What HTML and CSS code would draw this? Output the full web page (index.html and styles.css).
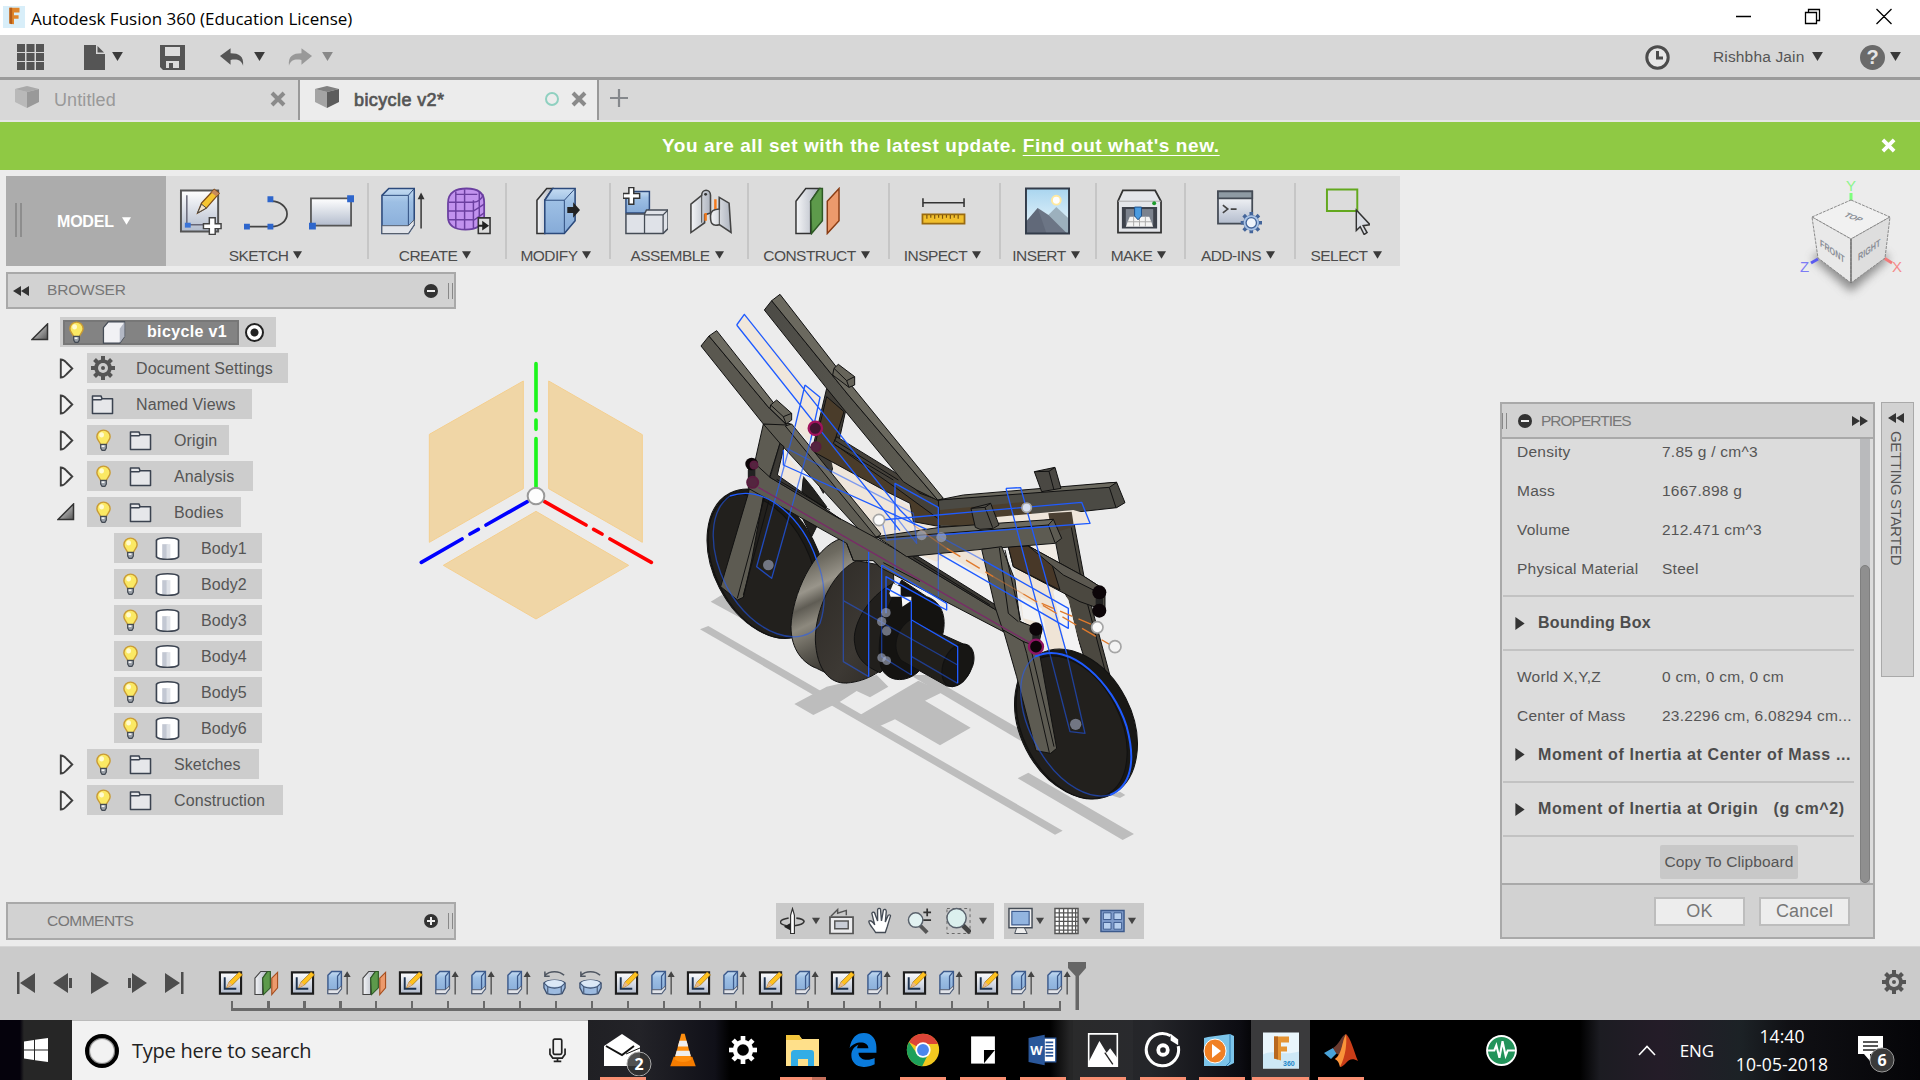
FILE: index.html
```html
<!DOCTYPE html>
<html lang="en">
<head>
<meta charset="utf-8">
<title>Autodesk Fusion 360 (Education License)</title>
<link rel="stylesheet" href="styles.css">
</head>
<body>
<svg class="defs" width="0" height="0" aria-hidden="true">
  <defs>
    <linearGradient id="gBlue" x1="0" y1="0" x2="0" y2="1"><stop offset="0" stop-color="#c5dcf2"/><stop offset=".3" stop-color="#9dbfe4"/><stop offset="1" stop-color="#86abd8"/></linearGradient>
    <linearGradient id="gPaper" x1="0" y1="0" x2="0" y2="1"><stop offset="0" stop-color="#fff"/><stop offset="1" stop-color="#b3bccd"/></linearGradient>
    <linearGradient id="gGrey" x1="0" y1="0" x2="1" y2="0"><stop offset="0" stop-color="#f4f5f7"/><stop offset="1" stop-color="#aeb4bf"/></linearGradient>
    <linearGradient id="gTri" x1="0" y1="0" x2="1" y2="1"><stop offset="0" stop-color="#eee"/><stop offset="1" stop-color="#555"/></linearGradient>
    <linearGradient id="gSilver" x1="0" y1="0" x2=".3" y2="1"><stop offset="0" stop-color="#4f4d47"/><stop offset=".22" stop-color="#6d6a60"/><stop offset=".38" stop-color="#99958b"/><stop offset=".48" stop-color="#5f5c54"/><stop offset=".6" stop-color="#8d897e"/><stop offset=".78" stop-color="#5b5850"/><stop offset="1" stop-color="#2e2c28"/></linearGradient>
    <linearGradient id="gBeam" x1="0" y1="0" x2="1" y2="1"><stop offset="0" stop-color="#4c4b46"/><stop offset="1" stop-color="#5f5d53"/></linearGradient>
    <linearGradient id="gFace" x1="0" y1="0" x2="1" y2="1"><stop offset="0" stop-color="#2c2925"/><stop offset=".6" stop-color="#3d3934"/><stop offset="1" stop-color="#2a2723"/></linearGradient>
    <linearGradient id="gSky" x1="0" y1="0" x2="0" y2="1"><stop offset="0" stop-color="#a9d5ef"/><stop offset="1" stop-color="#eef8fc"/></linearGradient>
  </defs>
  <symbol id="caret" viewBox="0 0 12 10"><path d="M0 0h12L6 10z" fill="currentColor"/></symbol>
  <symbol id="cube" viewBox="0 0 26 24"><path d="M1 4 13 1l12 3-12 3z" fill="currentColor" opacity=".75"/><path d="M1 4l12 3v16L1 17z" fill="currentColor" opacity=".5"/><path d="M25 4 13 7v16l12-6z" fill="currentColor"/></symbol>
  <symbol id="cross" viewBox="0 0 16 16"><path d="M2 2l12 12M14 2 2 14" stroke="currentColor" stroke-width="4" fill="none"/></symbol>
  <symbol id="rew" viewBox="0 0 16 10"><path d="M8 0v10L0 5zM16 0v10L8 5z" fill="#333"/></symbol>
  <symbol id="bulb" viewBox="0 0 18 24"><path d="M9 1a7 7 0 0 0-7 7c0 4 3.500 5 4 9h6c.5-4 4-5 4-9a7 7 0 0 0-7-7z" fill="#fbe964" stroke="#c99b35" stroke-width="1.500"/><ellipse cx="7" cy="6" rx="2.500" ry="2.800" fill="#fffbd0"/><path d="M6 16h6v4l-1.500 2.500h-3L6 20z" fill="#9aa0a8" stroke="#444b55" stroke-width="1.300"/><path d="M7 18h3" stroke="#fff" stroke-width="1.500"/></symbol>
  <symbol id="folder" viewBox="0 0 24 22"><path d="M1.500 20.500V2h9l1 3h11v15.500z" fill="#e6e7ea" stroke="#3b4350" stroke-width="1.600" stroke-linejoin="round"/><path d="M2 6h8.500l1-1" stroke="#3b4350" stroke-width="1.400" fill="none"/></symbol>
  <symbol id="body" viewBox="0 0 26 25"><path d="M1.500 4C4 .5 22 .5 24.500 4v17c-2.500 3.500-20.500 3.500-23 0z" fill="#fff" stroke="#3b4350" stroke-width="1.700"/><path d="M7.500 8h6v14.500h-6z" fill="#c3c8d3"/><path d="M12 8h4v14.500h-4z" fill="#dfe2e8"/></symbol>
  <symbol id="closed" viewBox="0 0 16 22"><path d="M1.500 1.500c3 0 4 1 6 3.500l6 6-6 6c-2 2.500-3 3.500-6 3.500z" fill="#f2f2f2" stroke="#3f3f3f" stroke-width="2"/></symbol>
  <symbol id="open" viewBox="0 0 18 18"><path d="M1 16.500 16.500 1v15.500z" fill="url(#gTri)" stroke="#333" stroke-width="1.500"/></symbol>
  <symbol id="gear" viewBox="0 0 24 24"><g fill="currentColor"><path d="M10 0h4v24h-4z"/><path d="M10 0h4v24h-4z" transform="rotate(45 12 12)"/><path d="M10 0h4v24h-4z" transform="rotate(90 12 12)"/><path d="M10 0h4v24h-4z" transform="rotate(135 12 12)"/></g><circle cx="12" cy="12" r="7" fill="none" stroke="currentColor" stroke-width="3.500"/><circle cx="12" cy="12" r="5" fill="var(--hole,#cdcdcd)"/><circle cx="12" cy="12" r="var(--hub,0)" fill="currentColor" class="hub"/></symbol>
  <symbol id="right" viewBox="0 0 10 14"><path d="M0 0v14l10-7z" fill="#333"/></symbol>

  <symbol id="tSketch" viewBox="0 0 26 26"><path d="M2 2h22v22H2z" fill="url(#gPaper)" stroke="#1d1d1d" stroke-width="2.200"/><path d="M7 7v12h12" stroke="#1d3350" stroke-width="2" fill="none"/><path d="M9 18l2.500-6L22 1.500l3.500 3L15 15z" fill="#ffc21f" stroke="#9a6b10" stroke-width=".7"/><path d="M9 18l2.500-6 3.500 3z" fill="#e8b88a"/></symbol>
  <symbol id="tPlane" viewBox="0 0 26 26"><path d="M1 8l6-7h7L9 8v17H1z" fill="url(#gGrey)" stroke="#444" stroke-width="1.200"/><path d="M9 8l5-7h3v17l-7 7z" fill="#5d9a4b" stroke="#2e5a25" stroke-width="1.200"/><path d="M18.500 8l6-6v16l-6 7z" fill="#ec9a6c" stroke="#a64f1f" stroke-width="1.200"/></symbol>
  <symbol id="tExt" viewBox="0 0 26 26"><path d="M2 5l4-4h10v18l-4 5H2z" fill="url(#gBlue)" stroke="#3c5a8c" stroke-width="1.500"/><path d="M12 24V6l4-5" stroke="#3c5a8c" stroke-width="1.300" fill="none"/><path d="M2 20h10l4-4v3l-4 5H2z" fill="#e1e4ea" stroke="#555d6c" stroke-width="1"/><path d="M22 25V3M19.500 6l2.500-4 2.500 4z" stroke="#444" stroke-width="1.300" fill="#444"/></symbol>
  <symbol id="tRev" viewBox="0 0 26 26"><path d="M3 5C8 0 18 0 23 5M3 1v5h5" stroke="#4f5661" stroke-width="1.600" fill="none"/><path d="M2 13c4-4 18-4 22 0v5l-3 6c-4 1.500-12 1.500-16 0l-3-6z" fill="#9dbbe0" stroke="#3f5270" stroke-width="1.400"/><path d="M3 13c4-4 16-4 20 0l-4 3.500c-4 1-8 1-12 0z" fill="#dbe8f6"/><path d="M2 13l4 4c4 1.500 10 1.500 14 0l4-4M6 17v7M20 17v7" stroke="#3f5270" stroke-width="1.100" fill="none"/></symbol>
</svg>

<header class="titlebar">
  <svg class="appicon" viewBox="0 0 24 24"><path d="M0 0h24v24H0z" fill="#d8eef9"/><path d="M7 2h11v5h-6v3h5v4h-5v6l-5-1z" fill="#e0862c"/><path d="M7 2h3v18l-3-1z" fill="#b65d18"/></svg>
  <span class="apptitle">Autodesk Fusion 360 (Education License)</span>
  <svg class="winbtns" viewBox="0 0 160 20"><g fill="none" stroke="#000" stroke-width="1.300"><path d="M1 9.500h15M70.500 5.500h11v11h-11zM73.500 5.500v-3h11v11h-3M141.500 2l15 15M156.500 2l-15 15"/></g></svg>
</header>

<div class="quickbar">
  <svg class="q-grid" viewBox="0 0 27 26"><path d="M0 0h8v8H0zM9.500 0h8v8h-8zM19 0h8v8h-8zM0 9h8v8H0zM9.500 9h8v8h-8zM19 9h8v8h-8zM0 18h8v8H0zM9.500 18h8v8h-8zM19 18h8v8h-8z" fill="#555"/></svg>
  <svg class="q-file" viewBox="0 0 21 25"><path d="M0 0h12v9h9v16H0z" fill="#555"/><path d="M13.500 1v6.500H20z" fill="#555"/></svg>
  <svg class="caret dark"><use href="#caret"/></svg>
  <svg class="q-save" viewBox="0 0 25 25"><path d="M0 0h25v25H3l-3-3z" fill="#555"/><path d="M5 2h15v9H5zM6 16h13v7H6z" fill="#dcdcdc"/><path d="M9 18h4v5H9z" fill="#555"/></svg>
  <svg class="q-undo" viewBox="0 0 26 18"><path d="M0 8l11-8v5c9 0 14 3 13 13-2-6-6-7-13-6v5z" fill="#555"/></svg>
  <svg class="caret dark"><use href="#caret"/></svg>
  <svg class="q-redo" viewBox="0 0 26 18"><path d="M25 8 14 0v5C5 5 0 8 1 18c2-6 6-7 13-6v5z" fill="#999"/></svg>
  <svg class="caret dim"><use href="#caret"/></svg>
  <span class="grow"></span>
  <svg class="q-clock" viewBox="0 0 25 25"><circle cx="12.500" cy="12.500" r="10.700" fill="#e6e6e6" stroke="#4c4c4c" stroke-width="3"/><path d="M12.500 6v7H18" stroke="#4c4c4c" stroke-width="3" fill="none"/></svg>
  <span class="user">Rishbha Jain</span>
  <svg class="caret dark"><use href="#caret"/></svg>
  <span class="q-help">?</span>
  <svg class="caret dark"><use href="#caret"/></svg>
</div>

<nav class="tabs">
  <div class="tab"><svg class="tabcube"><use href="#cube"/></svg><span class="tabname">Untitled</span><svg class="tabx"><use href="#cross"/></svg></div>
  <div class="tab active"><svg class="tabcube"><use href="#cube"/></svg><span class="tabname">bicycle v2*</span><span class="ring"></span><svg class="tabx"><use href="#cross"/></svg></div>
  <svg class="plus" viewBox="0 0 18 18"><path d="M9 0v18M0 9h18" stroke="#85888c" stroke-width="2.200"/></svg>
</nav>

<div class="notice"><span class="noticetext">You are all set with the latest update. <u>Find out what's new.</u></span><svg class="noticex"><use href="#cross"/></svg></div>

<main class="viewport">
  <svg class="scene" viewBox="0 170 1920 776">
    <!-- origin planes and axes -->
    <g transform="translate(400 340) scale(.33333)">
      <g fill="#f0d6a6" stroke="#f4cf90" stroke-width="3"><path d="M88 283 370 123v323L88 607z"/><path d="M446 123 727 284v323L446 446z"/><path d="M408 514 686 676 408 837 130 676z"/></g>
      <g stroke-width="11" stroke-linecap="round" fill="none"><path d="M408 71v141M408 240v28M408 296v144" stroke="#1cf51c"/><path d="M382 485 258 555M235 568 210 582M186 597 64 667" stroke="#00f"/><path d="M434 485 558 555M581 568 606 582M630 597 754 667" stroke="#f00"/></g>
      <circle cx="408" cy="468" r="25" fill="#fdfdfd" stroke="#999" stroke-width="6"/>
    </g>
    <!-- bicycle model -->
    <g transform="translate(680 280) scale(.33333)" stroke-linejoin="round">
      <g fill="#bdbdbd">
        <path d="M60 1048 85 1038 1148 1652 1125 1664z"/><path d="M690 1185h50L1045 1362v34z"/>
        <path d="M343 1272 440 1220 590 1185 625 1220 570 1252 530 1233 480 1265 400 1305z"/>
        <path d="M540 1305 715 1202 790 1235 735 1262 872 1343 780 1396 645 1318 600 1338z"/>
        <path d="M1013 1495 1045 1478 1362 1662 1328 1680zM92 965 125 945 250 1030 230 1040zM1290 1545l30-10 16 10-16 9z"/>
      </g>
      <g stroke="#111" stroke-width="3">
        <!-- rear wheel -->
        <path d="M370 590 395 620 440 680 395 770 360 700z" fill="#22211e"/>
        <g transform="rotate(-27 255 853)"><ellipse cx="259" cy="853" rx="158" ry="238" fill="#1b1a17"/><ellipse cx="246" cy="855" rx="141" ry="230" fill="#22201d"/></g>
        <!-- far leg and far lower beam -->
        <path d="M440 325 497 392 460 560 430 640 385 560z" fill="#3f3c36"/>
        <path d="M455 545 625 640 690 680 720 730 870 735 870 745 600 770 470 620z" fill="#efe6db" stroke="none"/>
        <path d="M440 350 492 395 465 480 670 605 790 660 870 700V745L770 738 700 725 690 670 620 635 455 545 400 515z" fill="#4a3c2a"/>
        <path d="M470 470 665 590 720 640 790 665 870 700V720L780 720 650 625 600 590 460 490z" fill="#45413a"/>
        <path d="M462 480 655 600M465 495 640 600" fill="none"/>
        <!-- far handlebar -->
        <path d="M253 90 275 62 505 345 775 662 710 630 670 605 497 395 440 325z" fill="url(#gBeam)"/>
        <path d="M275 62 300 43 470 262 790 655 775 662 505 345z" fill="#6b695f"/>
        <path d="M462 265 475 253 524 290V315L507 322 458 285z" fill="#66645a"/><path d="M524 290 500 302 507 322M500 302 462 265" fill="none"/>
        <!-- sketch profiles -->
        <path d="M170 135 193 103 375 318 420 352 400 450 385 482 345 440 360 370zM315 515 370 592 355 618 295 590z" fill="#f0e7dc" stroke="none"/>
        <!-- far seat rail -->
        <path d="M775 660 1310 607 1335 668 1310 683 900 728 780 742z" fill="#4b4a44"/>
        <path d="M780 690 1040 665 1060 712 860 738 775 735z" fill="#4b3e2d" stroke="none"/>
        <path d="M775 660 850 645 1290 608 1310 607 1288 622z" fill="#6b695f"/><path d="M1288 622 1308 683" />
        <path d="M1063 575 1125 562 1143 625 1085 635z" fill="#4a4843"/><path d="M1063 575 1107 574 1122 630M1107 574 1125 562" fill="none"/>
        <!-- far fork leg, beam and light profiles -->
        <path d="M1040 796 1125 790 1140 868z" fill="#f1ebe4" stroke="none"/>
        <path d="M1110 700 1175 692 1215 905 1300 1225 1210 1125 1165 985z" fill="#4b4840"/><path d="M1165 695 1205 905 1280 1190" fill="none"/>
        <path d="M940 712 1180 690 1215 700 1230 730 940 745z" fill="#efe6db" stroke="none"/>
        <path d="M1105 700 1175 695 1182 740 1115 760z" fill="#4b4033" stroke="none"/>
        <path d="M680 830 720 826 900 808 946 985 860 920z" fill="#f1f0ef" stroke="none"/>
        <path d="M720 826 900 808 925 890 880 870 800 825 770 845z" fill="#efe4d6" stroke="none"/>
        <path d="M1000 850 1135 915 1165 960 1205 1125 1110 1115 1030 1020z" fill="#efe4d6" stroke="none"/>
        <path d="M1135 915 1165 960 1205 1125 1160 1120 1120 935zM1022 950 1085 985 1108 1112 1075 1090 1068 1025 1030 1015z" fill="#f3f3f3" stroke="none"/>
        <path d="M985 800 1045 798 1210 888 1275 930V992L1200 965 1000 860z" fill="#4b4840"/><path d="M985 800 1045 798 1110 835 1140 930 1000 860z" fill="#483828"/><path d="M1045 798 1210 888 1275 930 1270 945 1150 885z" fill="#5b5850"/>
        <!-- drive unit -->
        <path d="M485 775C400 800 335 950 333 1040 333 1110 370 1150 410 1165L500 1209 600 1100 560 840z" fill="url(#gSilver)"/>
        <path d="M530 842C450 880 405 1000 406 1080 410 1170 450 1212 500 1209 560 1205 620 1170 650 1120L640 870 600 855z" fill="url(#gFace)"/>
        <path d="M640 910C560 950 515 1040 524 1090 530 1140 560 1160 600 1178L700 1100 690 940z" fill="#211f1c"/>
        <path d="M665 900 740 950C785 965 800 1010 789 1060L720 1170C690 1205 625 1215 602 1160 590 1090 600 1010 665 900z" fill="#141311"/>
        <path d="M628 940 640 910 662 920V950H632zM665 950H694V962L667 980zM728 920 780 952 770 958 728 940z" fill="#f6f6f6" stroke="none"/>
        <path d="M690 1020 850 1092C885 1092 888 1140 875 1165 860 1205 830 1222 800 1218L665 1142C635 1110 645 1050 690 1020z" fill="#211f1b"/>
        <ellipse cx="832" cy="1156" rx="42" ry="67" transform="rotate(22 832 1156)" fill="#171614"/>
        <!-- near leg, diagonal and handlebar -->
        <path d="M250 432 316 432 300 490 250 650 215 840 190 952 172 960 122 920 205 640 228 530z" fill="#5d5b52"/><path d="M255 645 172 955M270 650 190 945" fill="none"/>
        <path d="M250 432 330 430 600 762 590 775 540 752 300 490z" fill="#5e5c53"/><path d="M316 438 335 432 603 762 590 773z" fill="#6d6b61"/>
        <path d="M63 198 87 168 268 385 320 435 250 432z" fill="#5a5850"/><path d="M87 168 110 152 282 370 268 385z" fill="#6d6b61"/>
        <path d="M272 375 290 360 335 400V420L318 432 270 385z" fill="#66645a"/><path d="M335 400 310 410 318 430M310 410 272 375" fill="none"/>
        <!-- near lower beam -->
        <path d="M205 570 235 560 270 592 484 718 590 775 680 828 948 990 1022 1025 1085 1055 1070 1100 970 1055 600 862 580 842 520 842 500 790 205 625z" fill="#5d5b52"/>
        <path d="M270 592 300 490 312 500 292 585 482 718 450 700zM680 828 712 828 952 978 948 990z" fill="#3b3934"/>
        <path d="M290 598 450 690M700 832 930 975M520 842 500 790M580 842 600 862M610 848 720 905" fill="none"/>
        <!-- near seat rail -->
        <path d="M590 770 885 745 950 740 1120 718 1145 775 1125 790 905 808 680 830z" fill="#5d5b52"/><path d="M590 770 780 742 1120 718 1105 735 600 775z" fill="#6d6b61"/><path d="M1105 735 1125 788"/>
        <path d="M873 685 932 670 957 735 940 745 900 748 886 742z" fill="#504e47"/><path d="M875 685 915 682 938 743M915 682 932 670" fill="none"/>
        <!-- near fork leg -->
        <path d="M905 808 965 800 1005 900 1020 1025 1085 1050 1075 1100 1040 1090 970 1055 945 980z" fill="#5d5b52"/><path d="M958 803 985 1000 1015 1025M975 810 1022 1020" fill="none"/>
        <!-- front wheel -->
        <g transform="rotate(-27 1188 1332)"><ellipse cx="1188" cy="1332" rx="168" ry="237" fill="#191815"/><ellipse cx="1172" cy="1335" rx="146" ry="228" fill="#22201d"/></g>
        <path d="M970 1050 1030 1085 1075 1100 1130 1405 1112 1420 1068 1412 1010 1190z" fill="#5d5b52"/><path d="M1030 1085 1040 1120 1108 1418M1050 1095 1122 1400" fill="none"/>
      </g>
      <!-- sketch curves -->
      <g fill="none" stroke="#1f5bff" stroke-width="4">
        <path d="M170 135 193 103 660 690 705 735M170 135 660 752M375 315 420 352 392 480M375 315 345 440"/>
        <path d="M345 440 230 860 275 895 392 480" stroke-opacity=".7"/>
        <path d="M605 720 1205 667 1230 730 775 765"/><path d="M775 765 620 780 605 720" stroke-opacity=".5"/>
        <path d="M978 625 1022 623 1160 1120M978 625 1108 1115"/><path d="M1160 1120 1215 1360 1170 1355 1108 1115" stroke-opacity=".55"/>
        <path d="M645 750V610L775 682V760"/><path d="M645 750V870M775 760V950" stroke-opacity=".55"/>
        <path d="M310 510V555L740 748M905 838 1165 985V1045L775 820"/><path d="M320 505 700 700 710 790 640 700M780 770 905 838" stroke-opacity=".55"/>
        <path d="M566 815V1190M605 855 800 970V990L780 980 618 890V1000M605 855V1000M620 925 694 965V1185M695 1020 833 1100V1210"/>
        <path d="M490 780V1145L566 1190M490 962 833 1155M605 1000V1130L694 1185M695 1130 833 1210" stroke-opacity=".5"/>
        <path d="M150 648C260 610 370 720 410 840"/><path d="M150 648C90 690 80 800 140 920 220 1070 370 1110 420 1030 440 970 435 900 410 840" stroke-opacity=".55"/>
        <path d="M1065 1130C1170 1080 1300 1210 1340 1340 1370 1450 1350 1520 1290 1545" stroke-width="6"/><path d="M1065 1130C1000 1180 1010 1310 1090 1430 1150 1520 1230 1560 1290 1545" stroke-opacity=".55"/>
      </g>
      <path d="M235 622 1070 1100" stroke="#7a2a68" stroke-width="4"/>
      <g stroke="#e07a2c" stroke-width="4" fill="none"><path d="M800 805 940 890M1030 942 1300 1100" stroke-dasharray="48 20"/><path d="M1085 970 1250 1040" stroke-dasharray="40 20"/><path d="M700 735 800 805M940 890 1030 942" stroke-opacity=".45"/></g>
      <path d="M1068 1050v45M1258 940v45M215 555v50" stroke="#222" stroke-width="22"/>
      <g fill="#0c0508"><circle cx="1258" cy="937" r="21"/><circle cx="1258" cy="992" r="21"/><circle cx="1068" cy="1047" r="20"/><circle cx="1068" cy="1100" r="21" stroke="#8e1463" stroke-width="7"/><circle cx="215" cy="552" r="19"/></g>
      <g fill="#401530" stroke="#a0125c" stroke-width="7"><circle cx="406" cy="445" r="20"/></g>
      <g fill="#54253f" stroke="#5b1c40" stroke-width="5"><circle cx="408" cy="500" r="14"/><circle cx="218" cy="607" r="17"/><circle cx="222" cy="555" r="11"/></g>
      <g fill="#fafafa" stroke="#a5a5a5" stroke-width="5"><circle cx="597" cy="720" r="17"/><circle cx="1252" cy="1042" r="17"/><circle cx="1305" cy="1100" r="18" fill="#f4f4f4"/><circle cx="1040" cy="683" r="14" fill="#d5dff0"/></g>
      <g fill="#a8b0c8" fill-opacity=".6"><circle cx="725" cy="766" r="15"/><circle cx="784" cy="772" r="15"/><circle cx="265" cy="855" r="16"/><circle cx="1187" cy="1333" r="17"/><circle cx="618" cy="998" r="14"/><circle cx="605" cy="1025" r="14"/><circle cx="620" cy="1053" r="14"/><circle cx="605" cy="1133" r="13"/><circle cx="620" cy="1142" r="13"/></g>
    </g>
    <!-- view cube -->
    <g class="viewcube">
      <path d="M1812 258 1851 292 1890 258 1851 235z" class="cubeshadow"/>
      <path d="M1851 193v8" stroke="#7dff7d" stroke-width="3"/><path d="M1811 263l7-4" stroke="#5a5af0" stroke-width="3"/><path d="M1884 258l8 5" stroke="#f27a7a" stroke-width="3"/>
      <g stroke="#8a8a8a" stroke-width="1" stroke-dasharray="3 1"><path d="M1851 200 1890 217 1851 239 1812 217z" fill="#f1f1f1"/><path d="M1812 217 1851 239v44l-33-25z" fill="#e9e9e9"/><path d="M1890 217 1851 239v44l34-25z" fill="#dedede"/></g>
      <path d="M1851 239v44" stroke="#777" stroke-width="1.500"/>
      <text class="ax" x="1846" y="191" fill="#8bf58b">Y</text><text class="ax" x="1800" y="272" fill="#7c7cf5">Z</text><text class="ax" x="1892" y="272" fill="#f58b8b">X</text>
      <text class="facelabel" transform="matrix(.72 .5 0 1 1820 246)">FRONT</text><text class="facelabel" transform="matrix(.72 -.5 0 1 1858 261)">RIGHT</text><text class="facelabel" transform="matrix(.8 .3 -.7 .5 1843 216)">TOP</text>
    </g>
  </svg>

  <section class="ribbon">
    <div class="model"><span class="grip"></span><b>MODEL</b><svg class="caret"><use href="#caret"/></svg></div>
    <div class="group"><div class="icons">
      <svg viewBox="0 0 46 48"><path d="M2 3h38v42H2z" fill="url(#gPaper)" stroke="#555" stroke-width="2"/><path d="M8 8v30h22" stroke="#667" fill="none" stroke-width="1.500"/><path d="M6 36h6v5H6z" fill="#3b74d8"/><path d="M19 26l4-10L36 2l5 4-13 15z" fill="#f6c531" stroke="#7a4a1a" stroke-width="1.300"/><path d="M19 26l4-9 5 4z" fill="#f3e2c8" stroke="#444"/><path d="M36 2l5 4-3 3-5-4z" fill="#c98a5a"/><path d="M31 31h6v6h6v5h-6v6h-6v-6h-6v-5h6z" fill="#fff" stroke="#444" stroke-width="1.500"/></svg>
      <svg viewBox="0 0 46 48"><path d="M4 40h24c9 0 16-6 16-13s-7-13-16-13" fill="none" stroke="#444" stroke-width="1.800"/><path d="M0 37h6v6H0zM24 37h6v6h-6zM24 9h6v6h-6z" fill="#2e66cc"/></svg>
      <svg viewBox="0 0 46 48"><path d="M2 11h41v28H2z" fill="url(#gPaper)" stroke="#555" stroke-width="1.800"/><path d="M0 36h7v7H0zM39 8h7v7h-7z" fill="#2e66cc"/></svg>
    </div><div class="label">SKETCH<svg class="caret"><use href="#caret"/></svg></div></div>
    <div class="group"><div class="icons create">
      <svg viewBox="0 0 46 48"><path d="M2 8l7-7h26v37l-6 9H2z" fill="url(#gBlue)" stroke="#2c4a7c" stroke-width="1.600"/><path d="M29 47V8l6-7M2 8h27" stroke="#2c4a7c" fill="none" stroke-width="1"/><path d="M2 39h27l6-6v5l-6 9H2z" fill="#e1e4ea" stroke="#555d6c"/><path d="M42 42V10" stroke="#333" stroke-width="1.500"/><path d="M38.500 12 42 5l3.500 7z" fill="#333"/></svg>
      <svg viewBox="0 0 46 48"><path d="M1 16C1 4 10 1 20 1s18 3 18 14v14c0 10-9 14-19 14S1 40 1 30z" fill="#c192ee" stroke="#6b3fa0" stroke-width="1.800"/><path d="M2 15h25c5 0 9-4 10-8M1 24h26l11-7M1 33h27l10-7M9 4v37M18 2v41M27 13v29M33 4v34M9 7h22" stroke="#6b3fa0" stroke-width="1.500" fill="none"/><path d="M32 31h12v16H32z" fill="#ddd" stroke="#333" stroke-width="1.600"/><path d="M32 38h4v-4l7 5-7 5v-4h-4z" fill="#222"/></svg>
    </div><div class="label">CREATE<svg class="caret"><use href="#caret"/></svg></div></div>
    <div class="group"><div class="icons">
      <svg viewBox="0 0 46 48"><path d="M2 13 12 1h6l-8 12v34H2z" fill="url(#gGrey)" stroke="#333" stroke-width="1.600"/><path d="M10 13 18 1h23v33L30 47H10z" fill="url(#gBlue)" stroke="#2c4a7c" stroke-width="1.600"/><path d="M10 13h20v34M30 13 41 1" stroke="#2c4a7c" fill="none"/><path d="M33 20h6v-5l7 8-7 8v-5h-6z" fill="#222"/></svg>
    </div><div class="label">MODIFY<svg class="caret"><use href="#caret"/></svg></div></div>
    <div class="group"><div class="icons assemble">
      <svg viewBox="0 0 46 48"><path d="M3 12 9 4h18v18l-4 4H3z" fill="url(#gBlue)" stroke="#2c4a7c" stroke-width="1.500"/><path d="M3 27h19l2-4h17l5 0v19l-5 5H3z" fill="#dfe2e8" stroke="#444b55" stroke-width="1.500"/><path d="M22 27v20M22 28h19v19M41 28l5-5" stroke="#444b55" stroke-width="1.300" fill="none"/><path d="M6 0h5v6h6v5h-6v6H6v-6H0V6h6z" fill="#fff" stroke="#333" stroke-width="1.500"/></svg>
      <svg viewBox="0 0 46 48"><path d="M3 17 14 8c0-7 9-7 9 0v18l-6 2v8L3 46z" fill="url(#gGrey)" stroke="#444" stroke-width="1.600"/><path d="M32 10l10 6 2 30-12-8c-8 2-9-2-9-9 0-5 4-7 9-7z" fill="url(#gGrey)" stroke="#444" stroke-width="1.600"/><path d="M14 8v28M32 10v28" stroke="#444" fill="none"/><circle cx="18" cy="7" r="1.500" fill="#333"/><path d="M18 26v8M28 12v10" stroke="#f47a1c" stroke-width="2.500"/></svg>
    </div><div class="label">ASSEMBLE<svg class="caret"><use href="#caret"/></svg></div></div>
    <div class="group"><div class="icons">
      <svg viewBox="0 0 46 48"><path d="M1 14 11 1h14L16 14v33H1z" fill="url(#gGrey)" stroke="#333" stroke-width="1.500"/><path d="M16 14 25 1h3v33L17 47z" fill="#5d9a4b" stroke="#2e5a25" stroke-width="1.500"/><path d="M33 14 45 1v33L33 47z" fill="#ec9a6c" stroke="#8a3d14" stroke-width="1.500"/></svg>
    </div><div class="label">CONSTRUCT<svg class="caret"><use href="#caret"/></svg></div></div>
    <div class="group"><div class="icons">
      <svg viewBox="0 0 46 48"><path d="M2 11v9M44 11v9M2 15.500h42" stroke="#333" stroke-width="1.600"/><path d="M1.500 27.500h43v9.500h-43z" fill="#f1bf2d" stroke="#9a6b10" stroke-width="1.800"/><path d="M6 28v4M10 28v3M14 28v4M18 28v3M22 28v4M26 28v3M30 28v4M34 28v3M38 28v4" stroke="#7a5310" stroke-width="1.200"/></svg>
    </div><div class="label">INSPECT<svg class="caret"><use href="#caret"/></svg></div></div>
    <div class="group"><div class="icons">
      <svg viewBox="0 0 46 48"><path d="M1 1h44v46H1z" fill="url(#gSky)"/><path d="M22 30 32 20l13 12v15H20z" fill="#9cb0bd"/><path d="M1 35 13 21 24 28l19 19H1z" fill="#6c7585"/><path d="M13 21 1 35v12h21z" fill="#555d6d" opacity=".5"/><circle cx="32" cy="13" r="4.500" fill="#fff" stroke="#ffe9a0" stroke-width="2"/><path d="M1 1h44v46H1z" fill="none" stroke="#333c4a" stroke-width="2"/></svg>
    </div><div class="label">INSERT<svg class="caret"><use href="#caret"/></svg></div></div>
    <div class="group"><div class="icons">
      <svg viewBox="0 0 46 48"><path d="M1 14 6 3h33l6 11v32H1z" fill="#e4e6ea" stroke="#333" stroke-width="1.800"/><path d="M1 14h44" stroke="#aaa"/><path d="M5 20h36v22H5z" fill="#3d424c"/><path d="M9 22h28v16H9z" fill="#7b828e"/><path d="M13 30h20l4 10H9z" fill="#f4f4f4"/><path d="M17 30v10M23 30v10M29 30v10M11 35h24" stroke="#aaa"/><path d="M18 20h7v9l-3.500 4-3.500-4z" fill="#4a9be0" stroke="#1d4f88"/><circle cx="38" cy="16" r="2" fill="#1c9c2c"/></svg>
    </div><div class="label">MAKE<svg class="caret"><use href="#caret"/></svg></div></div>
    <div class="group"><div class="icons">
      <svg viewBox="0 0 46 48"><path d="M1 4h35v33H1z" fill="url(#gPaper)" stroke="#444b55" stroke-width="1.800"/><path d="M1 4h35v7H1z" fill="#8e9aa3" stroke="#444b55" stroke-width="1.800"/><path d="M6 18l5 4-5 4M14 22h6" stroke="#444" stroke-width="1.700" fill="none"/><g transform="translate(24 25) scale(.92)" class="bluegear"><use href="#gear" width="24" height="24"/><circle cx="12" cy="12" r="7.500" fill="none" stroke="#a9c3e6" stroke-width="2"/></g></svg>
    </div><div class="label">ADD-INS<svg class="caret"><use href="#caret"/></svg></div></div>
    <div class="group"><div class="icons">
      <svg viewBox="0 0 46 48"><path d="M2 2h31v22H2z" fill="none" stroke="#63a81e" stroke-width="2"/><path d="M32 23l14 15-7 1 4 7-3 2-4-8-4 4z" fill="#d9dce2" stroke="#333" stroke-width="1.500"/></svg>
    </div><div class="label">SELECT<svg class="caret"><use href="#caret"/></svg></div></div>
  </section>

  <div class="workspace">
    <div class="leftcol">
      <section class="browser">
        <div class="panelbar"><svg class="rew"><use href="#rew"/></svg><span>BROWSER</span><i class="knob minus"></i><i class="bars"></i></div>
        <ul class="tree">
          <li class="root"><svg class="tw open"><use href="#open"/></svg><div class="chip rootchip"><div class="sel"><svg class="bulb"><use href="#bulb"/></svg><svg class="box" viewBox="0 0 24 24"><path d="M1 7 6 1h17v15l-5 7H1z" fill="#f1f1f4" stroke="#444b55" stroke-width="1.300"/><path d="M18 8l5-7v15l-5 7z" fill="#b3b8c4"/></svg><b>bicycle v1</b></div><span class="radio"></span></div></li>
          <li class="l1"><svg class="tw"><use href="#closed"/></svg><div class="chip w201"><svg class="gear"><use href="#gear"/></svg><span>Document Settings</span></div></li>
          <li class="l1"><svg class="tw"><use href="#closed"/></svg><div class="chip w165"><svg class="folder first"><use href="#folder"/></svg><span>Named Views</span></div></li>
          <li class="l1"><svg class="tw"><use href="#closed"/></svg><div class="chip w142"><svg class="bulb"><use href="#bulb"/></svg><svg class="folder"><use href="#folder"/></svg><span>Origin</span></div></li>
          <li class="l1"><svg class="tw"><use href="#closed"/></svg><div class="chip w166"><svg class="bulb"><use href="#bulb"/></svg><svg class="folder"><use href="#folder"/></svg><span>Analysis</span></div></li>
          <li class="l1"><svg class="tw open"><use href="#open"/></svg><div class="chip w154"><svg class="bulb"><use href="#bulb"/></svg><svg class="folder"><use href="#folder"/></svg><span>Bodies</span></div></li>
          <li class="l2"><div class="chip w148"><svg class="bulb"><use href="#bulb"/></svg><svg class="bodyi"><use href="#body"/></svg><span>Body1</span></div></li>
          <li class="l2"><div class="chip w148"><svg class="bulb"><use href="#bulb"/></svg><svg class="bodyi"><use href="#body"/></svg><span>Body2</span></div></li>
          <li class="l2"><div class="chip w148"><svg class="bulb"><use href="#bulb"/></svg><svg class="bodyi"><use href="#body"/></svg><span>Body3</span></div></li>
          <li class="l2"><div class="chip w148"><svg class="bulb"><use href="#bulb"/></svg><svg class="bodyi"><use href="#body"/></svg><span>Body4</span></div></li>
          <li class="l2"><div class="chip w148"><svg class="bulb"><use href="#bulb"/></svg><svg class="bodyi"><use href="#body"/></svg><span>Body5</span></div></li>
          <li class="l2"><div class="chip w148"><svg class="bulb"><use href="#bulb"/></svg><svg class="bodyi"><use href="#body"/></svg><span>Body6</span></div></li>
          <li class="l1"><svg class="tw"><use href="#closed"/></svg><div class="chip w172"><svg class="bulb"><use href="#bulb"/></svg><svg class="folder"><use href="#folder"/></svg><span>Sketches</span></div></li>
          <li class="l1"><svg class="tw"><use href="#closed"/></svg><div class="chip w196"><svg class="bulb"><use href="#bulb"/></svg><svg class="folder"><use href="#folder"/></svg><span>Construction</span></div></li>
        </ul>
      </section>
      <div class="panelbar comments"><span>COMMENTS</span><i class="knob plusk"></i><i class="bars"></i></div>
    </div>

    <div class="navbars">
      <div class="nav nav-a">
        <svg viewBox="0 0 26 28"><path d="M11 8l2-7 2 7v19h-4z" fill="#fff" stroke="#333" stroke-width="1.200"/><path d="M9 11C-2 13-2 17 7 19M17 11c11 1 11 6-2 8" fill="none" stroke="#333" stroke-width="1.600"/><path d="M4 20l7-4v8z" fill="#222"/></svg>
        <svg class="caret"><use href="#caret"/></svg>
        <svg viewBox="0 0 26 28"><path d="M1 10h24v17H1z" fill="#ececee" stroke="#555" stroke-width="1.800"/><path d="M6 14h14v8H6z" fill="#c9cdd6" stroke="#555" stroke-width="1.500"/><path d="M2 9l7-7v4l9-3v5" fill="none" stroke="#555" stroke-width="1.500"/></svg>
        <svg viewBox="0 0 26 28"><path d="M8 26C4 20 0 16 1 14c2-1 4 1 6 4L4 6c1-2 3-1 3 0l3 8V2c1-2 3-1 3 0l1 12 2-11c1-2 3-1 3 1l-1 11 3-7c2-1 3 0 2 2l-3 10-2 6z" fill="#fff" stroke="#444b55" stroke-width="1.400"/></svg>
        <svg viewBox="0 0 26 28"><path d="M13 18l8 8" stroke="#555" stroke-width="4"/><circle cx="9" cy="13" r="7.500" fill="#e2f2f2" stroke="#59616c" stroke-width="1.500"/><path d="M17 5h8M21 1v8M17 13h8" stroke="#333" stroke-width="1.800"/></svg>
        <svg viewBox="0 0 26 28"><path d="M1 1h24v26H1z" fill="none" stroke="#666" stroke-dasharray="3 3"/><path d="M17 18l8 8" stroke="#444" stroke-width="5"/><circle cx="11" cy="11" r="10" fill="#dcf0ee" stroke="#59616c" stroke-width="1.500"/></svg>
        <svg class="caret"><use href="#caret"/></svg>
      </div>
      <div class="nav nav-b">
        <svg viewBox="0 0 26 28"><path d="M1 1h24v20H1z" fill="#f2f2f2" stroke="#444b55" stroke-width="1.500"/><path d="M4 4h18v14H4z" fill="#93b5e0" stroke="#3c5a8c" stroke-width="1.200"/><path d="M9 21h8l3 6H7z" fill="#eee" stroke="#444b55"/></svg>
        <svg class="caret"><use href="#caret"/></svg>
        <svg viewBox="0 0 26 28"><path d="M1 1h24v26H1z" fill="#fff" stroke="#555" stroke-width="1.500"/><path d="M5.500 1v26M10 1v26M14.500 1v26M19 1v26M22.500 1v26M1 5.500h24M1 10h24M1 14.500h24M1 19h24M1 23.500h24" stroke="#555" stroke-width="1.300"/></svg>
        <svg class="caret"><use href="#caret"/></svg>
        <svg viewBox="0 0 26 28"><path d="M1 3h24v22H1z" fill="#7f9ccb" stroke="#3c5a8c" stroke-width="1.500"/><path d="M3.500 5.500h8v7h-8zM14.500 5.500h8v7h-8zM3.500 15.500h8v7h-8zM14.500 15.500h8v7h-8z" fill="#b7cfee" stroke="#3c5a8c"/></svg>
        <svg class="caret"><use href="#caret"/></svg>
      </div>
    </div>

    <aside class="rightcol">
      <section class="props">
        <div class="panelbar phead"><i class="bars"></i><i class="knob minus"></i><span>PROPERTIES</span><svg class="rew ff"><use href="#rew"/></svg></div>
        <div class="pbody">
          <div class="plist">
            <div class="pr"><span>Density</span><span>7.85 g / cm^3</span></div>
            <div class="pr"><span>Mass</span><span>1667.898 g</span></div>
            <div class="pr"><span>Volume</span><span>212.471 cm^3</span></div>
            <div class="pr"><span>Physical Material</span><span>Steel</span></div>
            <div class="ps ruled"><svg><use href="#right"/></svg><b>Bounding Box</b></div>
            <div class="pr under"><span>World X,Y,Z</span><span>0 cm, 0 cm, 0 cm</span></div>
            <div class="pr"><span>Center of Mass</span><span>23.2296 cm, 6.08294 cm...</span></div>
            <div class="ps"><svg><use href="#right"/></svg><b>Moment of Inertia at Center of Mass ...</b></div>
            <div class="ps ruled two"><svg><use href="#right"/></svg><b>Moment of Inertia at Origin &nbsp; (g cm^2)</b></div>
            <button class="copy">Copy To Clipboard</button>
          </div>
          <div class="scroll"><div class="thumb"></div></div>
        </div>
        <div class="pfoot"><button>OK</button><button>Cancel</button></div>
      </section>
      <section class="started"><svg class="rew"><use href="#rew"/></svg><span>GETTING STARTED</span></section>
    </aside>
  </div>
</main>

<footer class="timeline">
  <div class="play">
    <svg viewBox="0 0 20 22"><path d="M1 0h2.500v22H1zM19 1v20L4 11z" fill="#4d4d4d"/></svg>
    <svg viewBox="0 0 20 22"><path d="M15 1v20L0 11zM16 6h3v10h-3z" fill="#4d4d4d"/></svg>
    <svg viewBox="0 0 20 22"><path d="M1 0v22l18-11z" fill="#4d4d4d"/></svg>
    <svg viewBox="0 0 20 22"><path d="M5 1v20l15-10zM1 6h3v10H1z" fill="#4d4d4d"/></svg>
    <svg viewBox="0 0 20 22"><path d="M1 1v20l15-10zM17 0h2.500v22H17z" fill="#4d4d4d"/></svg>
  </div>
  <div class="features">
    <svg><use href="#tSketch"/></svg><svg><use href="#tPlane"/></svg><svg><use href="#tSketch"/></svg><svg><use href="#tExt"/></svg><svg><use href="#tPlane"/></svg><svg><use href="#tSketch"/></svg><svg><use href="#tExt"/></svg><svg><use href="#tExt"/></svg><svg><use href="#tExt"/></svg><svg><use href="#tRev"/></svg><svg><use href="#tRev"/></svg><svg><use href="#tSketch"/></svg><svg><use href="#tExt"/></svg><svg><use href="#tSketch"/></svg><svg><use href="#tExt"/></svg><svg><use href="#tSketch"/></svg><svg><use href="#tExt"/></svg><svg><use href="#tSketch"/></svg><svg><use href="#tExt"/></svg><svg><use href="#tSketch"/></svg><svg><use href="#tExt"/></svg><svg><use href="#tSketch"/></svg><svg><use href="#tExt"/></svg><svg><use href="#tExt"/></svg>
    <div class="track"></div>
  </div>
  <svg class="marker" viewBox="0 0 18 48"><path d="M0 0h18v6l-7 8v34H7.500V14L0 6z" fill="#666"/></svg>
  <span class="grow"></span>
  <svg class="tgear"><use href="#gear"/></svg>
</footer>

<div class="taskbar">
  <div class="start"><svg viewBox="0 0 24 24"><path d="M0 3.400 10 2v9.500H0zM11 1.800 24 0v11.500H11zM0 12.500h10V22L0 20.600zM11 12.500h13V24L11 22.200z" fill="#fff"/></svg></div>
  <div class="search"><i class="cortana"></i><span>Type here to search</span><svg viewBox="0 0 18 26"><rect x="4.500" y="1" width="9" height="16" rx="1.500" fill="none" stroke="#222" stroke-width="1.800"/><path d="M1 11v6l3 4h10l3-4v-6M9 21v4M5 24.500h8" fill="none" stroke="#222" stroke-width="1.800"/></svg></div>
  <div class="apps">
    <div class="app on"><svg class="mail" viewBox="0 0 48 44"><path d="M0 14 18 2l18 12v20H0z" fill="#fff"/><path d="M2 14l16 9 12-9" fill="none" stroke="#111" stroke-width="2"/><path d="M22 22l14-6" stroke="#111"/><circle cx="35" cy="32" r="12" fill="#333" fill-opacity=".85" stroke="#aaa"/><text x="30.500" y="38" class="badge">2</text></svg></div>
    <div class="app"><svg viewBox="0 0 32 40"><path d="M5 28h22l4 11H1z" fill="#f57c00"/><path d="M14 1h4l8 30c-4 4-16 4-20 0z" fill="#ff8f0f"/><path d="M11.800 9h8.400l1.900 7h-12.200zM8.500 21h15l1.700 6H6.800z" fill="#eee"/></svg></div>
    <div class="app"><svg class="wgear"><use href="#gear"/></svg></div>
    <div class="app on split"><svg viewBox="0 0 34 34"><path d="M0 2h13l3 4h17v27H0z" fill="#ffe08a"/><path d="M0 2h13l3 5H0z" fill="#f3c53c"/><path d="M5 33V20c0-2 2-3 3-3h17c2 0 3 1 3 3v13h-6v-7H12v7z" fill="#33ade6"/></svg></div>
    <div class="app"><svg viewBox="0 0 32 38"><path d="M1 17C3 5 9 0 17 0c9 0 14 7 14 16v6H11c0 8 10 10 18 6v7C14 42 3 36 3 25c0-6 3-10 8-12-1 1-1.500 3-1.500 4H22c0-8-15-9-21 0z" fill="#0a7bdc"/></svg></div>
    <div class="app on"><svg viewBox="0 0 40 40"><circle cx="20" cy="20" r="19" fill="#f2c81f"/><path d="M20 20 3.500 10.500A19 19 0 0 1 36.500 10.500L37.500 13H20z" fill="#dc4437"/><path d="M3.500 10.500A19 19 0 0 0 19 39l7-14-12 1z" fill="#1da05a"/><circle cx="20" cy="20" r="9" fill="#fff"/><circle cx="20" cy="20" r="7" fill="#4b87ee"/></svg></div>
    <div class="app on"><svg viewBox="0 0 34 40"><path d="M3 4h28v32H3z" fill="#fff"/><path d="M18 20h13L18 36z" fill="#000"/><path d="M18 20h13v-1H17v17h1z" fill="#fff"/></svg></div>
    <div class="app on"><svg viewBox="0 0 34 40"><path d="M18 6h14v28H18z" fill="#fff" stroke="#2a579a" stroke-width="1.500"/><path d="M20 11h9M20 15h9M20 19h9M20 23h9M20 27h9" stroke="#2a579a" stroke-width="2"/><path d="M0 6 19 2v36L0 34z" fill="#2a579a"/><text x="2" y="26" class="wlet">W</text></svg></div>
    <div class="app on tint"><svg viewBox="0 0 34 38"><path d="M1 1h32v36H1z" fill="none" stroke="#fff" stroke-width="1.800"/><path d="M1 32 13 9l8 13 4-5 8 11v9H1z" fill="#fff"/><path d="M19 22l9 13" stroke="#222" stroke-width="1.500"/></svg></div>
    <div class="app on"><svg class="groove" viewBox="0 0 38 40"><path d="M27 5A17 17 0 1 0 35 16" fill="none" stroke="#fff" stroke-width="3.200"/><circle cx="19" cy="20" r="5" fill="none" stroke="#fff" stroke-width="4"/><path d="M27 3v7l8 5V9z" fill="#fff"/></svg></div>
    <div class="app on wide"><svg viewBox="0 0 34 34"><path d="M6 4l22-3 4 2v27l-6 3H2V5z" fill="#7cc4ea"/><path d="M28 1v28l-4 4" stroke="#2d7fb5" fill="none"/><ellipse cx="13" cy="18" rx="11" ry="12" fill="#f08024" stroke="#fff"/><path d="M10 11v14l9-7z" fill="#fff"/></svg></div>
    <div class="app on active"><svg viewBox="0 0 36 36"><path d="M0 0h36v36H0z" fill="#eaf6fc"/><path d="M0 36V22c10-6 20 2 36-3v17z" fill="#cde8f6"/><path d="M11 4h15v6h-8v4h6v5h-6v9l-7-2z" fill="#e59433"/><path d="M11 4h4v23l-4-1z" fill="#b8681f"/><text x="20" y="33" class="f360">360</text></svg></div>
    <div class="app on matlab"><svg viewBox="0 0 34 34"><path d="M0 20l9-5 4 5-6 6z" fill="#4aa3d8"/><path d="M9 15C15 12 17 3 22 1l-6 22-4-3z" fill="#6b3b30"/><path d="M22 1c5 4 8 18 12 27-5-3-9-2-12 2-2 2-4 4-6 4 0-7-4-7-5-8C18 22 18 8 22 1z" fill="#c93d18"/><path d="M22 1c1 8 0 22-6 33-1-5-3-7-5-8C18 22 18 8 22 1z" fill="#f9943a"/></svg></div>
  </div>
  <svg class="pulse" viewBox="0 0 30 30"><circle cx="15" cy="15" r="14" fill="#22935a" stroke="#fff" stroke-width="1.800"/><path d="M2 15h6l2-5 3 12 3-16 3 14 2-5h7" fill="none" stroke="#fff" stroke-width="2"/></svg>
  <div class="tray">
    <svg class="up" viewBox="0 0 18 11"><path d="M1 10 9 1.500 17 10" stroke="#fff" stroke-width="1.600" fill="none"/></svg>
    <span class="lang">ENG</span>
    <span class="clock">14:40<br>10-05-2018</span>
    <svg class="note" viewBox="0 0 38 38"><path d="M0 1h25v18H12v7l-6-7H0z" fill="#fff"/><path d="M5 7h15M5 11h15M5 15h15" stroke="#222" stroke-width="1.500"/><circle cx="24" cy="25" r="12" fill="#3a3a3a" stroke="#999"/><text x="19.500" y="31" class="badge">6</text></svg>
  </div>
</div>
</body>
</html>
```
FILE: styles.css
```css
* { box-sizing: border-box; }
html, body { margin: 0; width: 1920px; height: 1080px; overflow: hidden; }
body { display: flex; flex-direction: column; background: #ececec; font-family: "Liberation Sans", Arial, sans-serif; font-size: 16px; color: #555; }
svg { display: block; flex: none; }
button { font: inherit; color: inherit; padding: 0; }
.defs { position: absolute; }
.grow { flex: 1; }
.caret { width: 11px; height: 9px; color: #3a3a3a; }
.hub { r: var(--hub, 0); }

/* window title */
.titlebar { height: 35px; flex: none; background: #fff; display: flex; align-items: center; color: #000; font-family: "Open Sans", "Noto Sans", sans-serif; padding-left: 3px; }
.appicon { width: 22px; height: 24px; margin-bottom: 2px; }
.apptitle { font-size: 17px; margin-left: 6px; margin-top: 1px; white-space: nowrap; }
.winbtns { width: 160px; height: 20px; margin-left: auto; margin-right: 25px; margin-bottom: 1px; }

/* quick access bar */
.quickbar { height: 45px; flex: none; background: #d7d7d7; border-bottom: 3px solid #9b9b9b; display: flex; align-items: center; padding-left: 17px; padding-top: 2px; }
.quickbar .caret { margin-bottom: 2px; }
.q-grid { width: 27px; height: 26px; }
.q-file { width: 21px; height: 25px; margin-left: 40px; }
.q-file + .caret { margin-left: 7px; }
.q-save { width: 25px; height: 25px; margin-left: 37px; }
.q-undo { width: 25px; height: 18px; margin-left: 35px; }
.q-undo + .caret { margin-left: 9px; }
.q-redo { width: 25px; height: 18px; margin-left: 23px; }
.q-redo + .caret { margin-left: 9px; }
.dim { color: #888; }
.q-clock { width: 25px; height: 25px; }
.user { margin-left: 43px; margin-right: 8px; font-size: 15.500px; letter-spacing: .15px; color: #555; width: 91px; white-space: nowrap; }
.q-help { width: 25px; height: 25px; border-radius: 50%; background: #6a6a6a; color: #e6e6e6; font-weight: bold; font-size: 20px; line-height: 25px; text-align: center; margin-left: 37px; margin-right: 5px; }
.q-help + .caret { margin-right: 19px; }

/* document tabs */
.tabs { height: 42px; flex: none; background: #d8d8d8; display: flex; align-items: center; border-bottom: 2px solid #e6e6e6; }
.tab { width: 300px; height: 40px; display: flex; align-items: center; padding: 1px 12px 0 14px; border-right: 2px solid #999; color: #999; font-size: 18px; }
.tab.active { background: #ececec; color: #555; width: 299px; padding: 1px 10px 0 14px; }
.tabcube { width: 26px; height: 24px; margin-bottom: 8px; color: #999; }
.active .tabcube { color: #5c5c5c; }
.tabname { margin-left: 14px; flex: 1; letter-spacing: .1px; }
.active .tabname { -webkit-text-stroke: .7px #555; letter-spacing: .4px; }
.tabx { width: 16px; height: 16px; color: #8a8a8a; margin-bottom: 4px; }
.ring { width: 14px; height: 14px; border: 2.500px solid #8fd0c0; border-radius: 50%; margin-right: 12px; margin-bottom: 4px; }
.plus { width: 18px; height: 18px; margin-left: 11px; margin-bottom: 4px; }

.notice { height: 48px; flex: none; background: #8fc944; color: #fff; font-weight: bold; font-size: 19px; display: flex; align-items: center; justify-content: center; padding: 0 24px 1px 662px; }
.noticetext { flex: 1; white-space: nowrap; letter-spacing: .58px; }
.noticetext u { text-underline-offset: 3px; }
.noticex { width: 15px; height: 15px; }

/* modelling viewport */
.viewport { position: relative; height: 776px; flex: none; padding: 6px 6px 0; display: flex; flex-direction: column; background: #ececec; }
.scene { position: absolute; left: 0; top: 0; width: 1920px; height: 776px; }
.ax { font: 15px "Liberation Sans", sans-serif; }
.facelabel { font: bold 10px "Liberation Sans", sans-serif; fill: #8a8e96; }
.cubeshadow { fill: #666; filter: blur(5px); opacity: .7; }
.ribbon { position: relative; width: 1394px; height: 90px; background: #dcdcdc; display: grid; grid-template-columns: 160px 201px 138px 104px 138px 141px 111px 96px 89px 110px 106px; }
.model { background: #acacac; color: #fff; display: flex; align-items: center; padding-left: 9px; padding-top: 2px; font-size: 16px; }
.model b { margin-left: 35px; letter-spacing: -.2px; }
.model .caret { color: #fff; width: 9px; height: 8px; margin-left: 8px; margin-bottom: 3px; }
.grip { width: 7px; height: 34px; border: solid #8d8d8d; border-width: 0 2px; margin-bottom: 4px; }
.group { display: flex; flex-direction: column; align-items: center; position: relative; }
.group + .group { background: linear-gradient(#c6c6c6, #c6c6c6) 0 7px / 2px 76px no-repeat; }
.icons { display: flex; gap: 20px; margin-top: 11px; }
.icons.create { gap: 22px; }
.icons svg { width: 45px; height: 48px; }
.bluegear { color: #44659a; --hole: #eef3fa; }
.label { display: flex; align-items: center; gap: 5px; margin-top: 12px; margin-right: 2px; font-size: 15.500px; letter-spacing: -.55px; line-height: 18px; color: #4c4c4c; white-space: nowrap; }
.label .caret { width: 9px; height: 8px; margin-bottom: 3px; }

.workspace { position: relative; flex: 1; display: flex; padding: 6px 0 6px; }
.leftcol { width: 450px; display: flex; flex-direction: column; justify-content: space-between; }
.panelbar { height: 37px; background: #d2d2d2; border: 2px solid #a9a9a9; display: flex; align-items: center; padding: 0 1px 0 5px; color: #777; font-size: 15.500px; }
.rew { width: 16px; height: 10px; }
.browser .panelbar span { margin-left: 18px; letter-spacing: -.2px; margin-bottom: 1px; }
.comments { height: 38px; padding-left: 39px; }
.comments span { letter-spacing: -.5px; }
.knob { width: 14px; height: 14px; border-radius: 50%; margin-left: auto; margin-right: 10px; }
.minus { background: linear-gradient(#eee, #eee) center / 8px 2px no-repeat #333; }
.plusk { background: linear-gradient(#eee, #eee) center / 8px 2px no-repeat, linear-gradient(#eee, #eee) center / 2px 8px no-repeat #333; }
.bars { width: 5px; height: 16px; border: solid #888; border-width: 0 1px; }
.tree { list-style: none; margin: 8px 0 0; padding: 0; }
.tree li { height: 36px; display: flex; align-items: flex-start; }
.l1 { padding-left: 53px; }
.l2 { padding-left: 108px; }
.root { padding-left: 25px; }
.tw { width: 16px; height: 21px; margin: 5px 12px 0 0; }
.tw.open { width: 18px; height: 18px; margin: 6px 10px 0 0; }
.l1 .tw.open { margin: 6px 12px 0 -2px; }
.root .tw.open { margin-right: 11px; }
.chip { height: 30px; background: #cdcdcd; display: flex; align-items: center; padding-left: 8px; font-size: 16px; color: #555; white-space: nowrap; letter-spacing: .1px; }
.chip > span:last-child { margin-top: 1px; }
.bulb { width: 17px; height: 23px; margin-top: 1px; }
.folder { width: 23px; height: 21px; margin-left: 17px; margin-right: 22px; }
.folder.first { margin-left: -4px; }
.bodyi { width: 25px; height: 25px; margin-left: 16px; margin-right: 21px; }
.gear { width: 24px; height: 24px; margin-left: -4px; margin-right: 21px; color: #555; --hub: 2px; }
.chip.rootchip { width: 216px; padding: 0 12px 0 3px; justify-content: space-between; }
.sel { width: 176px; height: 25px; background: #838383; border: 2px solid #777; color: #fff; display: flex; align-items: center; padding-left: 3px; letter-spacing: .35px; }
.sel .box { width: 24px; height: 23px; margin: 0 21px 0 17px; }
.radio { width: 19px; height: 19px; border: 2px solid #222; border-radius: 50%; background: radial-gradient(#222 0 3.500px, #fff 4.500px); }
.w201 { width: 201px; } .w165 { width: 165px; } .w142 { width: 142px; } .w166 { width: 166px; }
.w154 { width: 154px; } .w148 { width: 148px; } .w172 { width: 172px; } .w196 { width: 196px; }

.navbars { display: flex; align-items: flex-end; gap: 10px; margin-left: 320px; padding-bottom: 1px; }
.nav { height: 36px; background: #c9c9c9; display: flex; align-items: center; }
.nav svg { width: 25px; height: 28px; }
.nav .caret { width: 8px; height: 8px; color: #444; }
.nav-a { width: 218px; padding-left: 4px; gap: 14px; }
.nav-a svg:nth-child(1) { margin-right: -7px; }
.nav-a svg:nth-child(2) { margin-right: -5px; }
.nav-a svg:nth-child(7) { margin-left: -6px; }
.nav-b { width: 140px; padding-left: 4px; gap: 2px; }
.nav-b .caret { margin-left: 1px; margin-right: 8px; }

/* properties */
.rightcol { margin-left: auto; margin-top: 130px; display: flex; align-items: flex-start; gap: 6px; }
.props { width: 375px; height: 537px; border: 2px solid #a9a9a9; background: #dcdcdc; display: flex; flex-direction: column; }
.phead { height: 35px; border-width: 0 0 2px; flex: none; padding-left: 0; }
.phead .knob { margin: 0 9px 0 11px; }
.phead span { letter-spacing: -1px; }
.ff { margin-left: auto; transform: scaleX(-1); margin-right: 4px; }
.pbody { flex: 1; display: flex; min-height: 0; justify-content: space-between; }
.plist { width: 352px; padding-left: 1px; font-size: 15.500px; color: #555; }
.pr { height: 39px; display: flex; align-items: center; padding-left: 14px; white-space: nowrap; letter-spacing: .25px; }
.pr:first-child { height: 32px; padding-bottom: 6px; }
.pr span:first-child { width: 145px; }
.ps { height: 39px; display: flex; align-items: center; padding-left: 12px; font-size: 16px; color: #4c4c4c; white-space: nowrap; letter-spacing: .62px; }
.ps svg { width: 10px; height: 13px; margin-right: 13px; }
.ruled { height: 56px; margin-top: 7px; border-top: 2px solid #c2c2c2; border-bottom: 2px solid #c2c2c2; }
.ruled:not(.two) { letter-spacing: .3px; }
.pr.under { height: 45px; padding-top: 6px; }
.copy { display: block; margin: 8px 0 0 157px; width: 138px; height: 34px; background: #c8c8c8; border: 0; border-radius: 2px; white-space: nowrap; letter-spacing: .1px; }
.scroll { width: 10px; margin-right: 3px; background: #b9babc; display: flex; align-items: flex-end; }
.thumb { width: 10px; height: 318px; background: #8f8f8f; border-radius: 5px; border: 1px solid #7f7f7f; }
.pfoot { height: 54px; flex: none; background: #d2d2d2; border-top: 2px solid #a9a9a9; display: flex; gap: 14px; padding: 12px 0 0 152px; }
.pfoot button { width: 91px; height: 29px; background: #ededed; border: 2px solid #bdbdbd; font-size: 18px; color: #777; letter-spacing: .2px; }
.started { width: 33px; height: 275px; background: #d2d2d2; border: 1.500px solid #a9a9a9; display: flex; flex-direction: column; align-items: center; padding-top: 10px; gap: 8px; padding-right: 3px; }
.started span { writing-mode: vertical-rl; font-size: 15px; color: #555; white-space: nowrap; letter-spacing: -.35px; }

/* timeline */
.timeline { height: 74px; flex: none; background: #cbcbcb; border-top: 1px solid #d6d6d6; display: flex; }
.play { display: flex; gap: 17px; padding: 25px 0 0 16px; width: 218px; }
.play svg { width: 20px; height: 22px; }
.features { width: 853px; display: grid; grid-template-columns: repeat(24, 26px); column-gap: 10px; grid-template-rows: 25px 10px; row-gap: 6px; align-content: start; padding-top: 23px; }
.features svg { width: 25px; height: 26px; }
.track { grid-column: 1 / -1; margin-left: 13px; width: 830px; height: 10px; border-bottom: 3px solid #6a6a6a; background: repeating-linear-gradient(90deg, #6a6a6a 0 2.500px, transparent 2.500px 36px); }
.marker { width: 18px; height: 48px; margin-top: 15px; margin-left: -3px; }
.tgear { width: 24px; height: 24px; color: #555; --hole: #cbcbcb; --hub: 2px; margin: 23px 14px 0 0; }

/* windows taskbar */
.taskbar { height: 60px; flex: none; background: linear-gradient(90deg, #05020c 0 20px, #262626 24px 72px, #202024 588px, #232328 640px, #101018 715px, #000 730px 1050px, #262627 1070px, #25262a 1150px, #0c0c12 1240px, #000 1260px 1580px, #1c1c22 1600px, #241c28 1660px, #1c2226 1740px, #101014 1790px, #050508); display: flex; align-items: center; color: #fff; font-family: "Open Sans", "Noto Sans", sans-serif; }
.start { width: 72px; display: flex; justify-content: center; }
.start svg { width: 24px; height: 24px; }
.search { width: 516px; height: 60px; background: #f2f2f2; border-top: 1px solid #bbb; display: flex; align-items: center; padding: 0 22px 0 13px; color: #222; font-size: 20px; }
.search span { flex: 1; margin-left: 13px; letter-spacing: -.25px; }
.search svg { width: 17px; height: 25px; }
.cortana { width: 34px; height: 34px; border: 4px solid #000; border-radius: 50%; box-shadow: inset 0 0 1px 1px #777; }
.apps { display: flex; margin-left: 5px; }
.app { width: 60px; height: 60px; display: flex; align-items: center; justify-content: center; background: linear-gradient(#f98f73, #f98f73) center bottom / 46px 3px no-repeat; }
.app:not(.on) { background: none; }
.app svg { height: 34px; width: 34px; }
.app .mail { width: 48px; height: 44px; margin-left: 10px; margin-top: 8px; }
.app .wgear { width: 28px; height: 32px; color: #fff; --hole: #000; }
.app .groove { width: 38px; height: 38px; }
.split { background: linear-gradient(90deg, #f98f73 32px, #c46f5b 32px) center bottom / 46px 3px no-repeat; }
.tint { background-color: rgba(255, 255, 255, .02); }
.app.wide { padding-right: 6px; width: 58px; }
.app.active { width: 59px; background: linear-gradient(#f98f73, #f98f73) center bottom / 57px 3px no-repeat #3a3a3c; }
.app.active svg { width: 36px; height: 37px; }
.matlab { width: 62px; }
.badge { font: bold 16px "Open Sans", sans-serif; fill: #fff; }
.wlet { font: bold 15px "Open Sans", sans-serif; fill: #fff; }
.f360 { font: bold 7px "Liberation Sans", sans-serif; fill: #1b86c8; }
.pulse { width: 31px; height: 31px; margin-left: 114px; }
.tray { margin-left: auto; display: flex; align-items: center; font-size: 17px; }
.up { width: 18px; height: 11px; }
.lang { margin-left: 24px; letter-spacing: -.1px; }
.clock { margin-left: 19px; text-align: center; line-height: 28px; letter-spacing: .1px; width: 98px; font-size: 17.500px; white-space: nowrap; }
.note { width: 38px; height: 38px; margin: 8px 24px 0 27px; }
```
